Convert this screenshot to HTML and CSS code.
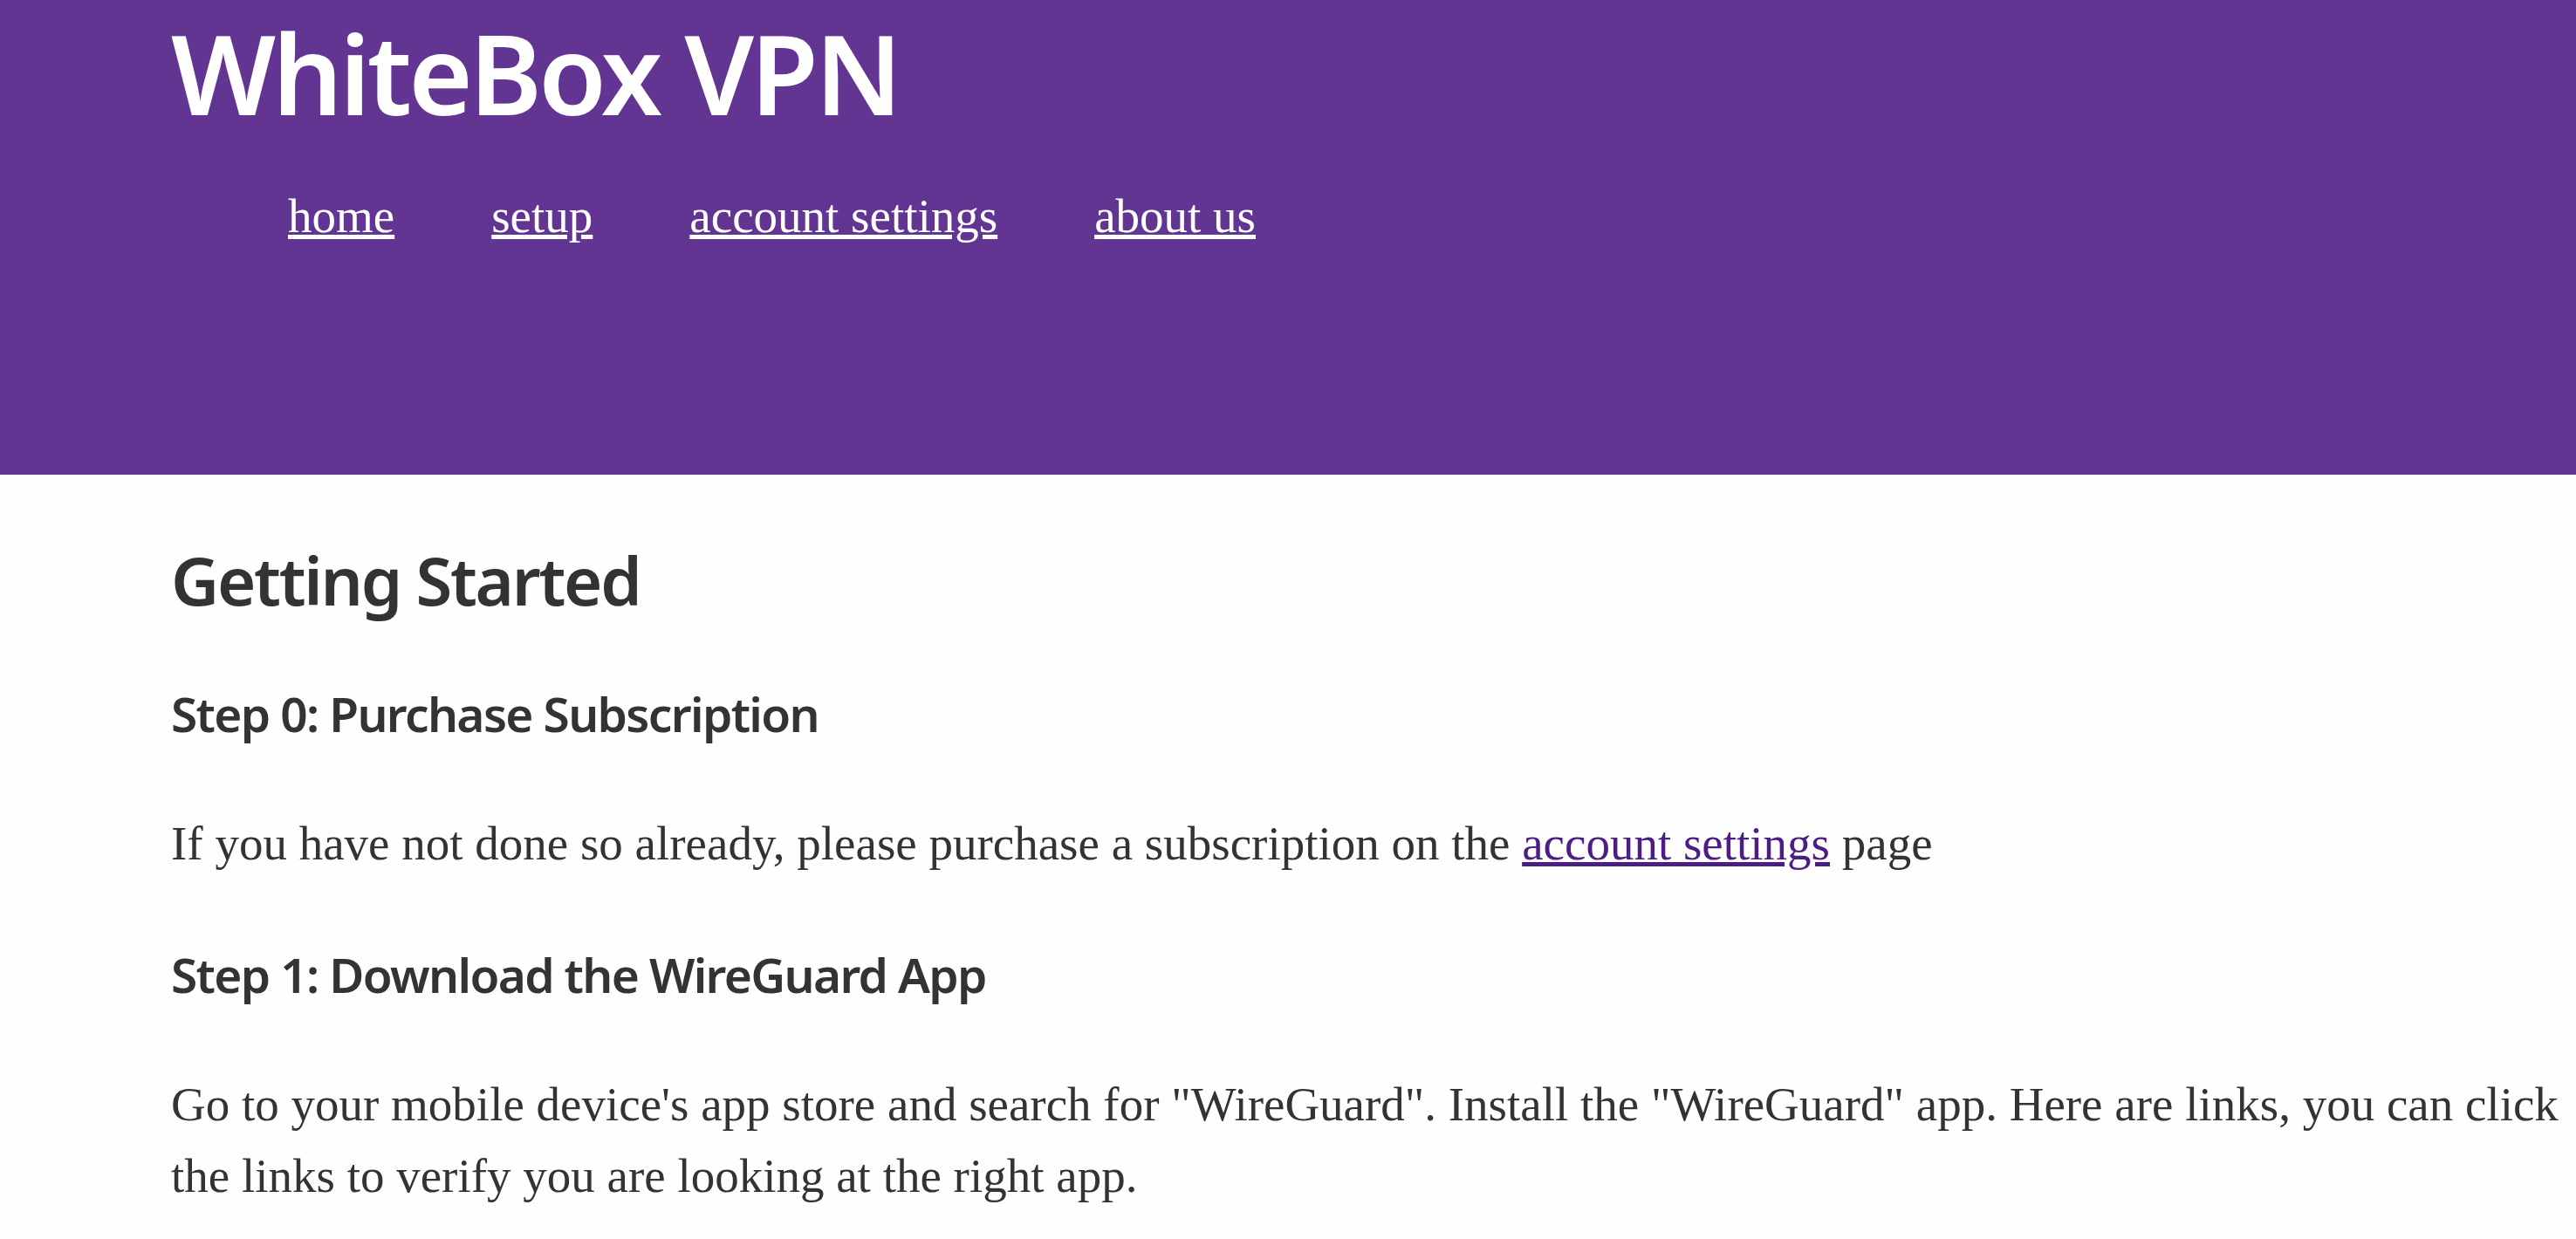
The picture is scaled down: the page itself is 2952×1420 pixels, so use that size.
FILE: index.html
```html
<!DOCTYPE html>
<html lang="en">
<head>
<meta charset="utf-8">
<title>WhiteBox VPN - Setup</title>
<link rel="stylesheet" href="styles.css">
</head>
<body>
<header class="site-header">
  <h1 class="site-title">WhiteBox VPN</h1>
  <nav class="site-nav">
    <a href="#" class="nav-link">home</a>
    <a href="#" class="nav-link">setup</a>
    <a href="#" class="nav-link">account settings</a>
    <a href="#" class="nav-link">about us</a>
  </nav>
</header>
<main class="content">
  <h2 class="page-title">Getting Started</h2>
  <h3 class="step-title">Step 0: Purchase Subscription</h3>
  <p class="step-text">If you have not done so already, please purchase a subscription on the <a href="#" class="text-link">account settings</a> page</p>
  <h3 class="step-title">Step 1: Download the WireGuard App</h3>
  <p class="step-text">Go to your mobile device's app store and search for "WireGuard". Install the "WireGuard" app. Here are links, you can click the links to verify you are looking at the right app.</p>
</main>
</body>
</html>
```
FILE: styles.css
```css
html, body {
  margin: 0;
  padding: 0;
  background: #fefefe;
}

body {
  font-family: "Liberation Serif", "Times New Roman", serif;
  font-size: 55px;
  line-height: 1.5;
  color: #333333;
}

.site-header {
  background: #633593;
  height: 544px;
  box-sizing: border-box;
  padding: 8px 0 0 196px;
}

.site-title {
  margin: 0;
  font-family: "Noto Sans", "Open Sans", sans-serif;
  font-weight: 600;
  font-size: 126px;
  line-height: 151px;
  letter-spacing: -0.03em;
  color: #ffffff;
}

.site-nav {
  display: flex;
  gap: 111px;
  margin: 48px 0 0 134px;
}

.nav-link {
  color: #ffffff;
  text-decoration: underline;
}

.content {
  padding: 0 0 0 196px;
}

.page-title {
  margin: 75px 0 0 0;
  font-family: "Noto Sans", "Open Sans", sans-serif;
  font-weight: 600;
  font-size: 76px;
  line-height: 91px;
  letter-spacing: -0.03em;
}

.step-title {
  margin: 74px 0 0 0;
  font-family: "Noto Sans", "Open Sans", sans-serif;
  font-weight: 600;
  font-size: 55px;
  line-height: 67px;
  letter-spacing: -0.03em;
}

.step-text {
  margin: 75px 0 0 0;
}

.text-link {
  color: #4b1d85;
}
```
